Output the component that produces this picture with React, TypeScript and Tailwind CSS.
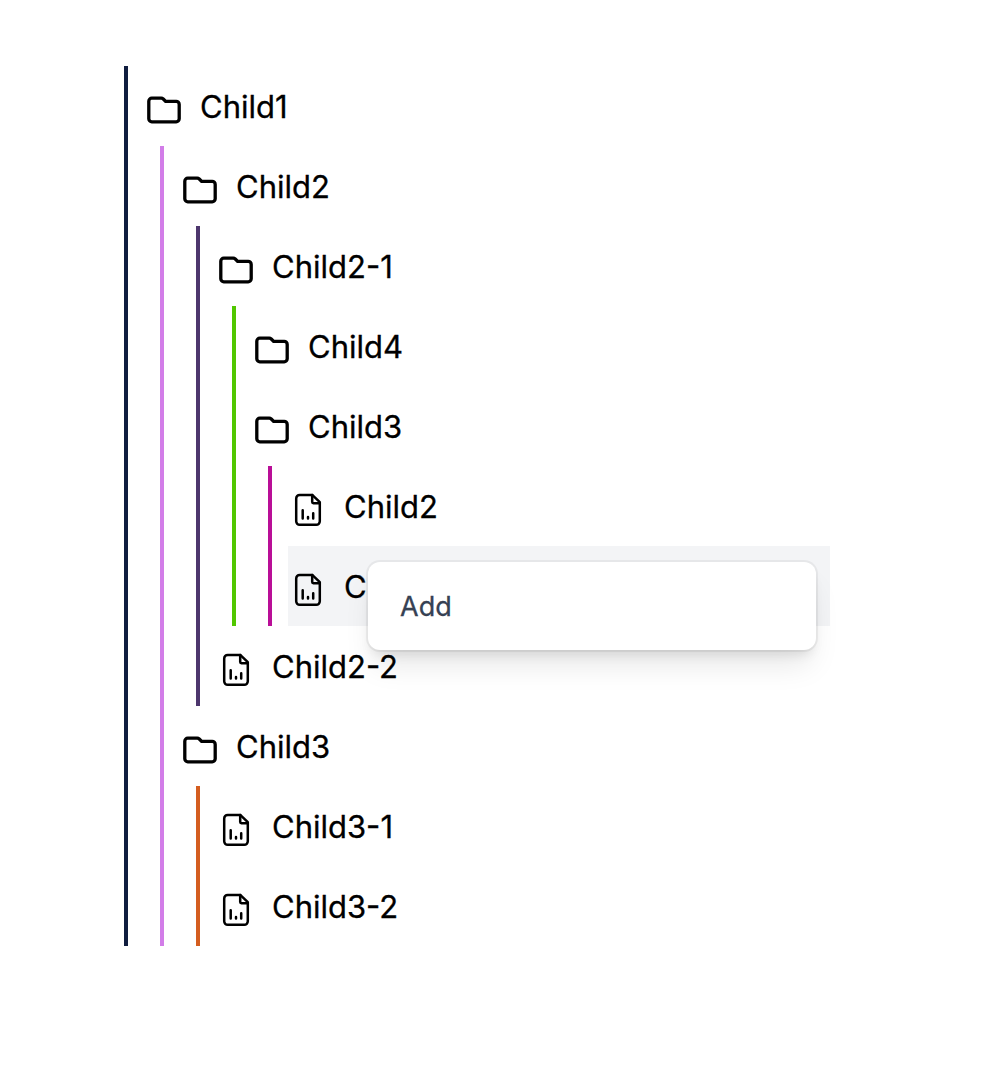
import type { ReactNode } from "react";

type Node = { name: string; line?: string; children?: Node[]; active?: boolean };

const tree: Node[] = [
  {
    name: "Child1",
    line: "border-[#d27de8]",
    children: [
      {
        name: "Child2",
        line: "border-[#4d366d]",
        children: [
          {
            name: "Child2-1",
            line: "border-[#51c700]",
            children: [
              { name: "Child4", children: [] },
              {
                name: "Child3",
                line: "border-[#b90e97]",
                children: [{ name: "Child2" }, { name: "Child3", active: true }],
              },
            ],
          },
          { name: "Child2-2" },
        ],
      },
      {
        name: "Child3",
        line: "border-[#d45d1f]",
        children: [{ name: "Child3-1" }, { name: "Child3-2" }],
      },
    ],
  },
];

function FolderIcon() {
  return (
    <svg className="h-10 w-10 shrink-0" viewBox="0 0 40 40" fill="none" stroke="currentColor" strokeWidth="3.3" strokeLinejoin="round">
      <path d="M4.8 11.2a3 3 0 0 1 3-3H17.3c.8 0 1.4.3 2 .8l2.3 2.4H32.2a3 3 0 0 1 3 3V28.8a3 3 0 0 1-3 3H7.8a3 3 0 0 1-3-3Z" />
    </svg>
  );
}

function FileIcon() {
  return (
    <svg className="h-10 w-10 shrink-0" viewBox="0 0 40 40" fill="none" stroke="currentColor" strokeWidth="2.5" strokeLinejoin="round" strokeLinecap="round">
      <path d="M24.2 4.9H11.7a3.5 3.5 0 0 0-3.5 3.5V31.3a3.5 3.5 0 0 0 3.5 3.5H28.3a3.5 3.5 0 0 0 3.5-3.5V12.2Z" />
      <path d="M24.2 4.9V12.1a1.2 1.2 0 0 0 1.2 1.2H31.8" />
      <path d="M14.7 20.2V28.6M20 26.9V28.6M25.2 23.3V28.6" />
    </svg>
  );
}

function Branch({ line, nested, children }: { line: string; nested?: boolean; children: ReactNode }) {
  return <ul className={`border-l-4 pl-4 ${nested ? "ml-4" : ""} ${line}`}>{children}</ul>;
}

function ContextMenu() {
  return (
    <div className="absolute left-20 top-4 z-10 flex h-[88px] w-[448px] items-center rounded-xl bg-white px-8 pt-px text-[27px] leading-[41px] text-gray-700 shadow-[0_0_0_2px_rgba(0,0,0,0.05),0_20px_30px_-6px_rgba(0,0,0,0.1),0_8px_12px_-4px_rgba(0,0,0,0.1)]">
      Add
    </div>
  );
}

function TreeItem({ node }: { node: Node }) {
  return (
    <li>
      <div className={`relative flex h-20 items-center ${node.active ? "bg-[#f3f4f6]" : ""}`}>
        <div className="pt-2">{node.children ? <FolderIcon /> : <FileIcon />}</div>
        <div className="ml-4 pt-0.5">{node.name}</div>
        {node.active && <ContextMenu />}
      </div>
      {node.children && node.line && (
        <Branch line={node.line} nested>
          {node.children.map((child) => (
            <TreeItem key={child.name} node={child} />
          ))}
        </Branch>
      )}
    </li>
  );
}

export default function App() {
  return (
    <main className="min-h-screen bg-white pl-[124px] pr-[164px] pt-[66px] font-['Inter',sans-serif] text-[31px] font-normal leading-[46px] text-black [-webkit-text-stroke:0.3px]">
      <Branch line="border-[#101d3f]">
        {tree.map((node) => (
          <TreeItem key={node.name} node={node} />
        ))}
      </Branch>
    </main>
  );
}
